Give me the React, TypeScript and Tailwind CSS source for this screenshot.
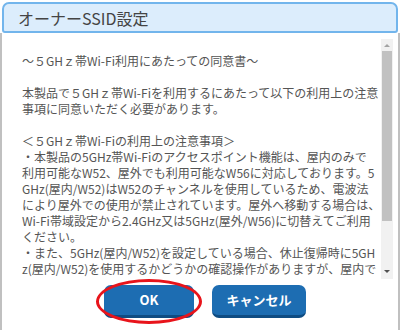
import React from "react";

const lines: string[] = [
  "～５GHｚ帯Wi-Fi利用にあたっての同意書～",
  "",
  "本製品で５GHｚ帯Wi-Fiを利用するにあたって以下の利用上の注意",
  "事項に同意いただく必要があります。",
  "",
  "＜５GHｚ帯Wi-Fiの利用上の注意事項＞",
  "・本製品の5GHz帯Wi-Fiのアクセスポイント機能は、屋内のみで",
  "利用可能なW52、屋外でも利用可能なW56に対応しております。5",
  "GHz(屋内/W52)はW52のチャンネルを使用しているため、電波法",
  "により屋外での使用が禁止されています。屋外へ移動する場合は、",
  "Wi-Fi帯域設定から2.4GHz又は5GHz(屋外/W56)に切替えてご利用",
  "ください。",
  "・また、5GHz(屋内/W52)を設定している場合、休止復帰時に5GH",
  "z(屋内/W52)を使用するかどうかの確認操作がありますが、屋内で",
];

export default function App() {
  return (
    <div
      className="w-[400px] h-[330px] bg-white overflow-hidden flex flex-col"
      style={{ fontFamily: '"Noto Sans CJK JP", "Noto Sans", sans-serif' }}
    >
      <div className="mx-[2px] mt-[2px] h-[31px] shrink-0 bg-[#dcedfc] border-2 border-[#72b5ec] rounded-t-[7px] rounded-b-[3px] flex items-center pl-[14px]">
        <span className="text-[16px] text-[#444] leading-none">オーナーSSID設定</span>
      </div>
      <div className="flex-1 flex flex-col border-l-2 border-r-2 border-[#c0c0c0]">
        <div className="flex h-[240px] mt-[6px] pr-[5px]">
          <div className="flex-1 pl-[20px] pt-[14px] overflow-hidden text-[12px] leading-[16px] text-[#555]">
            {lines.map((l, i) => (
              <div key={i} className="whitespace-nowrap h-[16px]">
                {l || "\u00a0"}
              </div>
            ))}
          </div>
          <div className="w-[12px] bg-[#f1f1f1] flex flex-col items-center">
            <div className="h-[12px] w-full flex items-center justify-center">
              <div className="w-0 h-0 border-l-[3px] border-r-[3px] border-b-[3px] border-l-transparent border-r-transparent border-b-[#a3a3a3]" />
            </div>
            <div className="w-[10px] h-[170px] bg-[#c1c1c1]" />
            <div className="flex-1" />
            <div className="h-[16px] w-full flex items-center justify-center">
              <div className="w-0 h-0 border-l-[3px] border-r-[3px] border-t-[3px] border-l-transparent border-r-transparent border-t-[#505050]" />
            </div>
          </div>
        </div>
        <div className="flex pl-[102px] gap-[18px] mt-[6px]">
          <div className="relative">
            <button className="w-[90px] h-[33px] rounded-[7px] bg-[#1d6db2] border-b-[3px] border-[#0f4c82] text-white font-bold text-[13px] flex items-center justify-center">
              OK
            </button>
            <div className="absolute -left-[8px] -right-[8px] -top-[6px] -bottom-[6px] rounded-[50%] border-[3px] border-[#e8141b]" />
          </div>
          <button className="w-[94px] h-[33px] rounded-[7px] bg-[#1d6db2] border-b-[3px] border-[#0f4c82] text-white font-bold text-[13px] flex items-center justify-center">
            キャンセル
          </button>
        </div>
      </div>
    </div>
  );
}
